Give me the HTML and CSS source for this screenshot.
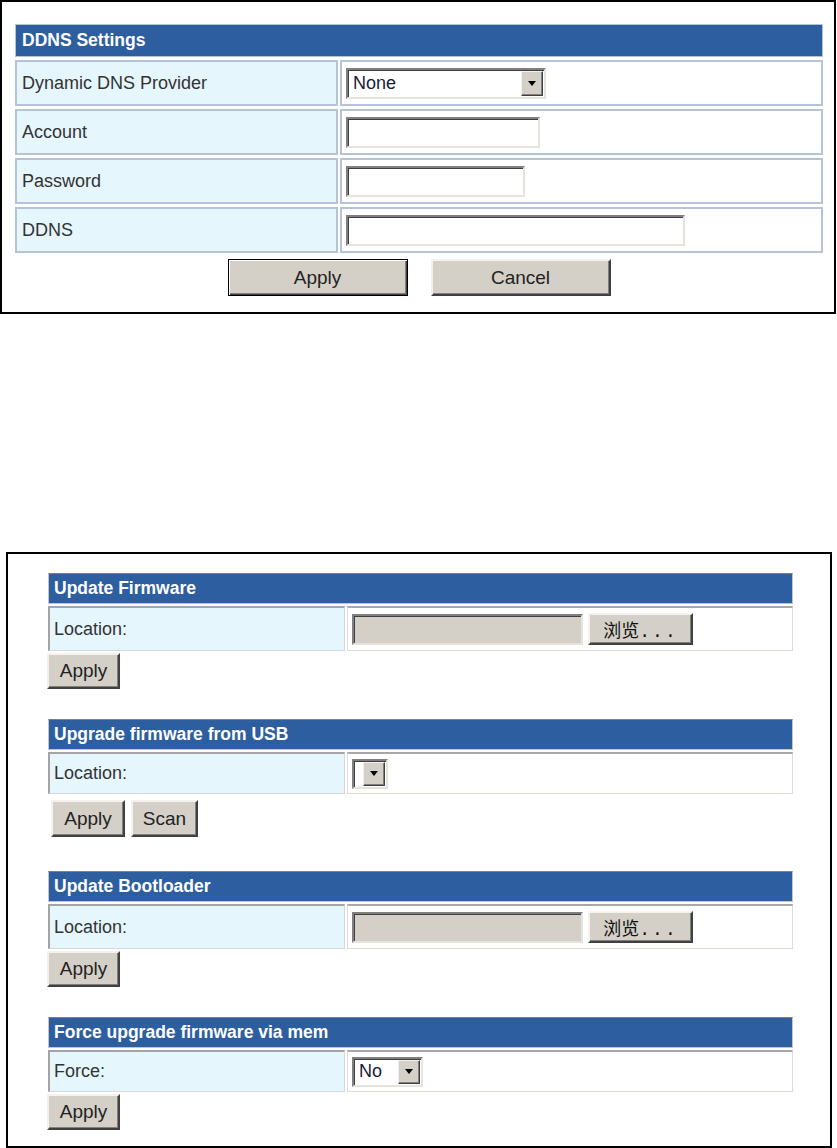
FILE: index.html
```html
<!DOCTYPE html>
<html lang="en">
<head>
<meta charset="utf-8">
<title>Router settings</title>
<link rel="stylesheet" href="styles.css">
</head>
<body>
<div class="frame frame-ddns">
  <div class="ddns">
    <div class="head">DDNS Settings</div>
    <div class="ddns-row">
      <div class="cell label">Dynamic DNS Provider</div>
      <div class="cell value">
        <div class="select select-provider"><span class="select-text">None</span><span class="select-btn"><span class="arrow"></span></span></div>
      </div>
    </div>
    <div class="ddns-row">
      <div class="cell label">Account</div>
      <div class="cell value"><div class="text-input w-account"></div></div>
    </div>
    <div class="ddns-row">
      <div class="cell label">Password</div>
      <div class="cell value"><div class="text-input w-password"></div></div>
    </div>
    <div class="ddns-row">
      <div class="cell label">DDNS</div>
      <div class="cell value"><div class="text-input w-ddns"></div></div>
    </div>
  </div>
  <div class="actions-center">
    <button class="btn btn-default btn-wide">Apply</button>
    <button class="btn btn-wide">Cancel</button>
  </div>
</div>

<div class="frame frame-fw">
  <div class="fw">
    <div class="section">
      <div class="head sec-head">Update Firmware</div>
      <div class="sec-row">
        <div class="cell label">Location:</div>
        <div class="cell value">
          <div class="text-input file-text"></div>
          <button class="btn btn-browse">浏览<span class="dots">...</span></button>
        </div>
      </div>
      <div class="sec-actions"><button class="btn btn-apply-sm">Apply</button></div>
    </div>

    <div class="section">
      <div class="head sec-head">Upgrade firmware from USB</div>
      <div class="sec-row sec-row-sm">
        <div class="cell label">Location:</div>
        <div class="cell value">
          <div class="select select-usb"><span class="select-text"></span><span class="select-btn"><span class="arrow"></span></span></div>
        </div>
      </div>
      <div class="sec-actions sec-actions-usb">
        <button class="btn btn-apply-usb">Apply</button>
        <button class="btn btn-scan">Scan</button>
      </div>
    </div>

    <div class="section section-lg">
      <div class="head sec-head">Update Bootloader</div>
      <div class="sec-row">
        <div class="cell label">Location:</div>
        <div class="cell value">
          <div class="text-input file-text"></div>
          <button class="btn btn-browse">浏览<span class="dots">...</span></button>
        </div>
      </div>
      <div class="sec-actions"><button class="btn btn-apply-sm">Apply</button></div>
    </div>

    <div class="section">
      <div class="head sec-head">Force upgrade firmware via mem</div>
      <div class="sec-row sec-row-sm">
        <div class="cell label">Force:</div>
        <div class="cell value">
          <div class="select select-no"><span class="select-text">No</span><span class="select-btn"><span class="arrow"></span></span></div>
        </div>
      </div>
      <div class="sec-actions"><button class="btn btn-apply-sm">Apply</button></div>
    </div>
  </div>
</div>
</body>
</html>
```

FILE: styles.css
```css
body {
  margin: 0;
  background: #fff;
  color: #333;
  font-family: "Liberation Sans", Arial, sans-serif;
}

.frame {
  box-sizing: border-box;
  border: 2px solid #000;
}

.frame-ddns {
  width: 836px;
  height: 314px;
  padding: 22px 0 0 13px;
}

.frame-fw {
  width: 826px;
  height: 596px;
  margin: 238px 0 0 6px;
  padding: 19px 0 0 40px;
}

/* headers */
.head {
  box-sizing: border-box;
  display: flex;
  align-items: center;
  background: #2d5e9f;
  color: #fff;
  font-weight: bold;
  font-size: 17.5px;
  border: 1px solid #b4c3d4;
  padding-left: 6px;
}

.ddns {
  width: 808px;
  display: flex;
  flex-direction: column;
  gap: 3px;
}

.ddns .head {
  height: 33px;
}

.ddns-row {
  display: grid;
  grid-template-columns: 323px 1fr;
  column-gap: 2px;
  height: 46px;
}

.cell {
  box-sizing: border-box;
  display: flex;
  align-items: center;
}

.label {
  background: #e5f6fd;
  font-size: 18px;
  color: #333;
}

.ddns .cell {
  border: 2px solid #b4c4d6;
}

.ddns .label {
  padding-left: 5px;
}

.ddns .value {
  padding-left: 4px;
  background: #fff;
}

/* form controls */
.text-input {
  box-sizing: border-box;
  height: 31px;
  background: #fff;
  border: 2px solid;
  border-color: #808080 #e6e3dc #e6e3dc #808080;
  box-shadow: inset 1px 1px 0 #404040;
}

.w-account { width: 194px; }
.w-password { width: 179px; }
.w-ddns { width: 339px; }

.select {
  box-sizing: border-box;
  display: flex;
  height: 31px;
  background: #fff;
  border: 2px solid;
  border-color: #808080 #e6e3dc #e6e3dc #808080;
  box-shadow: inset 1px 1px 0 #404040;
  padding: 1px;
}

.select-text {
  flex: 1;
  display: flex;
  align-items: center;
  padding-left: 4px;
  font-size: 18px;
  color: #1a1a3a;
}

.select-btn {
  box-sizing: border-box;
  width: 22px;
  display: flex;
  align-items: center;
  justify-content: center;
  background: #d4d0c8;
  border: 1px solid;
  border-color: #f2f0ec #404040 #404040 #f2f0ec;
  box-shadow: inset -1px -1px 0 #808080;
}

.arrow {
  width: 0;
  height: 0;
  border-left: 4px solid transparent;
  border-right: 4px solid transparent;
  border-top: 5px solid #000;
}

.select-provider { width: 200px; }
.select-usb { width: 36px; height: 30px; }
.select-no { width: 71px; height: 30px; }

.btn {
  box-sizing: border-box;
  font-family: "Liberation Sans", Arial, sans-serif;
  font-size: 19px;
  color: #222;
  background: #d4d0c8;
  border: 2px solid;
  border-color: #f4f2ee #404040 #404040 #f4f2ee;
  box-shadow: inset -1px -1px 0 #808080;
  padding: 0;
  margin: 0;
}

.btn-default {
  border: 1px solid #000;
  box-shadow: inset 1px 1px 0 #fff, inset -1px -1px 0 #404040, inset -2px -2px 0 #808080;
}

.actions-center {
  width: 808px;
  display: flex;
  justify-content: center;
  gap: 23px;
  margin-top: 6px;
}

.btn-wide {
  width: 180px;
  height: 37px;
}

/* firmware sections */
.fw {
  width: 745px;
}

.section + .section {
  margin-top: 30px;
}

.section.section-lg {
  margin-top: 34px;
}

.sec-head {
  height: 31px;
  border-color: #c4c4c4;
  border-top-color: #808080;
  padding-left: 5px;
}

.sec-row {
  margin-top: 2px;
  display: grid;
  grid-template-columns: 297px 1fr;
  column-gap: 2px;
  height: 45px;
}

.sec-row-sm {
  height: 42px;
}

.fw .label {
  border: 1px solid;
  border-width: 2px 1px 1px 2px;
  border-color: #a4a4a4 #d8d8d8 #d8d8d8 #a4a4a4;
  padding-left: 4px;
}

.fw .value {
  border: 1px solid;
  border-width: 2px 1px 1px 1px;
  border-color: #a8a8a8 #dedbd4 #dedbd4 #dedbd4;
  padding-left: 4px;
  gap: 5px;
  background: #fff;
}

.file-text {
  width: 231px;
  background: #d4d0c8;
}

.btn-browse {
  width: 105px;
  height: 32px;
  font-family: "Noto Sans CJK SC", "Liberation Sans", sans-serif;
  font-size: 18px;
  color: #111;
}

.dots {
  letter-spacing: 2px;
  font-family: "Liberation Mono", monospace;
}

.sec-actions {
  margin-top: 2px;
  margin-left: -1px;
  display: flex;
  gap: 6px;
}

.sec-actions-usb {
  margin-top: 6px;
  margin-left: 3px;
}

.btn-apply-sm {
  width: 73px;
  height: 36px;
}

.btn-apply-usb {
  width: 74px;
  height: 37px;
}

.btn-scan {
  width: 67px;
  height: 37px;
}
```
